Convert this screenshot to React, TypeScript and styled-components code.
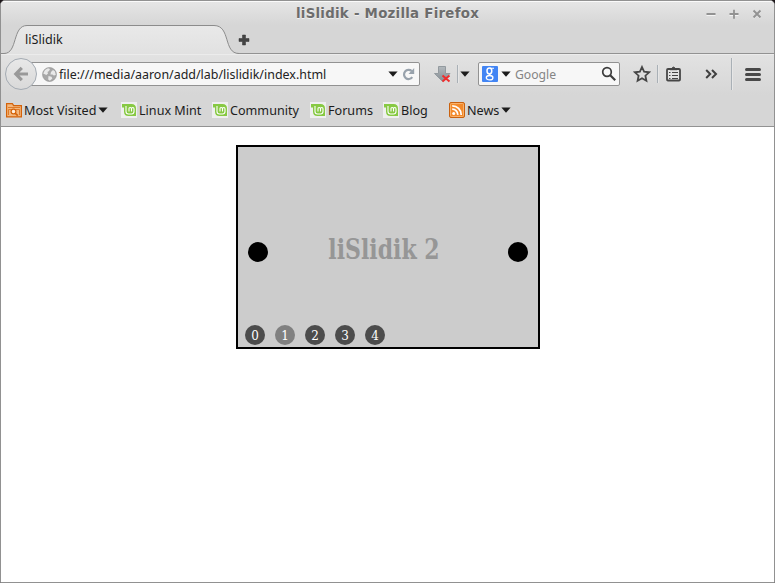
import React from 'react';
import styled, { createGlobalStyle } from 'styled-components';

const Global = createGlobalStyle`
  * { box-sizing: border-box; }
  body { margin: 0; background: #1b1518; overflow: hidden; }
  svg { display: block; flex: none; }
`;

const Window = styled.div`
  width: 775px;
  height: 583px;
  display: flex;
  flex-direction: column;
  border: 1px solid #919191;
  border-radius: 5px 5px 0 0;
  overflow: hidden;
  background: #fff;
  color: #1c1c1c;
  font: 12.6px/18px 'Noto Sans', 'Open Sans', sans-serif;
  white-space: nowrap;
`;

const TitleBar = styled.header`
  height: 24px;
  flex: none;
  display: grid;
  grid-template-columns: 1fr auto 1fr;
  align-items: center;
  border-top: 1px solid #fafafa;
  background: linear-gradient(#e5e5e5, #d6d6d6);
`;

const Title = styled.h1`
  grid-column: 2;
  margin: 0;
  padding-top: 1px;
  font: bold 13.33px/20px 'DejaVu Sans', sans-serif;
  letter-spacing: 0.27px;
  color: #6c6c6c;
  text-shadow: 0 1px #f0f0f0;
`;

const WindowButtons = styled.div`
  justify-self: end;
  display: flex;
  gap: 13px;
  margin-right: 12px;
`;

const TabStrip = styled.div`
  height: 29px;
  flex: none;
  display: flex;
  background: #d6d6d6;
  border-bottom: 1px solid #929292;
`;

const Tab = styled.div`
  position: relative;
  width: 236px;
  height: 29px;
  flex: none;
  padding: 6px 0 0 24px;
`;

const TabShape = styled.svg`
  position: absolute;
  left: 0;
  top: 0;
`;

const TabLabel = styled.span`
  position: relative;
`;

const NewTab = styled.div`
  padding: 9px 0 0 1px;
`;

const NavBar = styled.nav`
  height: 41px;
  flex: none;
  display: flex;
  align-items: center;
  padding: 0 0 2px 4px;
  border-top: 1px solid #ececec;
  background: linear-gradient(#e2e2e2, #d6d6d6);
`;

const BackButton = styled.div`
  width: 32px;
  height: 32px;
  flex: none;
  display: grid;
  place-items: center;
  border: 1px solid #a4abb3;
  border-radius: 50%;
  background: linear-gradient(#e8e8e8, #d9d9d9);
  z-index: 1;
`;

const Field = styled.div<{ $width: number; $left: number; $pad: number }>`
  width: ${p => p.$width}px;
  height: 24px;
  flex: none;
  display: flex;
  align-items: center;
  margin-left: ${p => p.$left}px;
  padding-left: ${p => p.$pad}px;
  border: 1px solid #929292;
  border-radius: 2px;
  background: #f7f7f7;
`;

const FieldText = styled.span<{ $width: number; $muted?: boolean }>`
  width: ${p => p.$width}px;
  flex: none;
  padding-top: 2px;
  font-size: ${p => (p.$muted ? 12.2 : 12.45)}px;
  color: ${p => (p.$muted ? '#858585' : '#222')};
`;

const Slot = styled.div<{ $left: number }>`
  flex: none;
  margin-left: ${p => p.$left}px;
`;

const Divider = styled.div<{ $left: number; $height: number }>`
  width: 2px;
  height: ${p => p.$height}px;
  flex: none;
  margin-left: ${p => p.$left}px;
  background: linear-gradient(90deg, #a9b0b6 50%, #e6e6e6 50%);
`;

const GoogleBadge = styled.div`
  width: 16px;
  height: 16px;
  margin-right: 3px;
  border-radius: 1px;
  background: #4285f4;
  display: grid;
  place-items: center;
`;

const Bookmarks = styled.div`
  height: 32px;
  flex: none;
  display: flex;
  align-items: center;
  padding: 0 0 2px 5px;
  border-bottom: 1px solid #929292;
  background: #d6d6d6;
`;

const Bookmark = styled.div<{ $width: number }>`
  width: ${p => p.$width}px;
  flex: none;
  display: flex;
  align-items: center;
  gap: 2px;
`;

const BookmarkLabel = styled.span`
  padding-top: 2px;
`;

const Page = styled.main`
  flex: 1;
  display: flex;
  justify-content: center;
  align-items: flex-start;
  padding-top: 18px;
  background: #fff;
`;

const Slider = styled.section`
  width: 304px;
  height: 204px;
  display: grid;
  grid-template-rows: 178px 20px;
  margin-left: 1px;
  border: 2px solid #000;
  background: #ccc;
`;

const Stage = styled.div`
  display: flex;
  justify-content: space-between;
  padding: 95px 10px 0;
`;

const Arrow = styled.button`
  width: 20px;
  height: 20px;
  padding: 0;
  border: 0;
  border-radius: 50%;
  background: #000;
`;

const Caption = styled.h2`
  margin: -8px 0 0 -8px;
  width: 112px;
  display: flex;
  justify-content: center;
  font: bold 27px/32px 'DejaVu Serif', serif;
  color: #969696;
  transform: scaleX(0.815);
`;

const Dots = styled.div`
  display: flex;
  gap: 10px;
  padding-left: 7px;
`;

const Dot = styled.span<{ $active: boolean }>`
  width: 20px;
  height: 20px;
  border-radius: 50%;
  background: ${p => (p.$active ? '#808080' : '#4c4c4c')};
  color: #fff;
  font: 13.3px/21px 'DejaVu Serif Condensed', 'DejaVu Serif', serif;
  text-align: center;
`;

const Caret = () => (
  <svg width="10" height="6" viewBox="0 0 10 6"><path d="M0.4 .5h9.2L5 5.7z" fill="#1c1c1c" /></svg>
);

const MintIcon = () => (
  <svg width="16" height="16" viewBox="0 0 16 16">
    <path d="M0 0h16v16H0z" fill="#efefef" />
    <path d="M1 2h9.5Q15 2 15 6.5V14H7.5Q3 14 3 9.5V5.5H1z" fill="#87c943" />
    <path d="M5 4v5.5Q5 12 7.5 12h3Q13 12 13 9.5V7q0-1.5-1.2-1.5T10.5 7v2.5M10.5 7q0-1.5-1.3-1.5T8 7v2.5" fill="none" stroke="#fff" strokeWidth="1.1" />
  </svg>
);

const FolderIcon = () => (
  <svg width="16" height="16" viewBox="0 0 16 16">
    <path d="M.6 14.9V1.6h5.8l1.2 2h7.8v11.3z" fill="#f3b77d" stroke="#d46209" strokeWidth="1.2" />
    <path d="M2 5.5h12M2.5 13V7.5h11V13" fill="none" stroke="#de7b29" />
    <circle cx="7.5" cy="9.5" r="2.4" fill="#fff0df" stroke="#d46209" strokeWidth="1.2" />
    <path d="m9.3 11.3 2.5 2.4" stroke="#d46209" strokeWidth="1.6" />
  </svg>
);

const RssIcon = () => (
  <svg width="16" height="16" viewBox="0 0 16 16">
    <rect x=".5" y=".5" width="15" height="15" rx="1.5" fill="#f38a2b" stroke="#c9610f" />
    <rect x="1.5" y="1.5" width="13" height="13" rx="1" fill="none" stroke="#f9b36d" />
    <circle cx="4.7" cy="11.4" r="1.5" fill="#fff" />
    <path d="M3.2 7.2a5.5 5.5 0 0 1 5.6 5.7M3.2 3.8a9 9 0 0 1 9 9.1" fill="none" stroke="#fff" strokeWidth="1.8" />
  </svg>
);

const GlobeIcon = () => (
  <svg width="15" height="15" viewBox="0 0 15 15">
    <circle cx="7.5" cy="7.5" r="6.9" fill="#a8a8a8" stroke="#999" strokeWidth=".8" />
    <path d="M1.2 6.6 3 3l3-1.8 2 .8-1 2-1.5 1L6 6.6 4.4 8zM9 5l2-2 2 1.6.8 3.4-2 .6-1.4-1.2-2 .2zM6.5 9l3 .8.8 1.7-2.4 2.2-1.7-1.2z" fill="#e9e9e9" />
  </svg>
);

const GoogleIcon = () => (
  <svg width="12" height="14" viewBox="0 0 12 14" fill="none" stroke="#fff">
    <ellipse cx="5.4" cy="4" rx="2.4" ry="2.9" strokeWidth="1.5" />
    <path d="M6 1.2h4M6.6 6.6q-2 1 .2 2.1" strokeWidth="1.1" />
    <ellipse cx="5.6" cy="10.7" rx="3.3" ry="2.2" strokeWidth="1.3" />
  </svg>
);

const bookmarks = [
  { label: 'Linux Mint', width: 91 },
  { label: 'Community', width: 98 },
  { label: 'Forums', width: 73 },
  { label: 'Blog', width: 66 },
];

export default function App() {
  return (
    <>
      <Global />
      <Window>
        <TitleBar>
          <Title>liSlidik - Mozilla Firefox</Title>
          <WindowButtons>
            <svg width="10" height="10" viewBox="0 0 10 10"><path d="M.5 6.5h9" stroke="#f4f4f4" /><path d="M.5 5h9" stroke="#929292" strokeWidth="1.8" /></svg>
            <svg width="10" height="10" viewBox="0 0 10 10"><path d="M.5 6.5h9" stroke="#f4f4f4" /><path d="M.5 5h9M5 .7v9" stroke="#929292" strokeWidth="1.8" /></svg>
            <svg width="10" height="10" viewBox="0 0 10 10"><path d="m1.5 2 7 7m0-7-7 7" stroke="#f4f4f4" strokeWidth="2" /><path d="m1.5 1.5 7 7m0-7-7 7" stroke="#929292" strokeWidth="2" /></svg>
          </WindowButtons>
        </TitleBar>
        <TabStrip>
          <Tab>
            <TabShape width="240" height="29" viewBox="0 0 240 29">
              <defs><linearGradient id="tab" x2="0" y2="1"><stop stopColor="#e9e9e9" /><stop offset="1" stopColor="#e1e1e1" /></linearGradient></defs>
              <path d="M0 28.5H3C17 28.5 11 .5 26 .5H213C230 .5 222 28.5 238 28.5V29H0z" fill="url(#tab)" />
              <path d="M0 28.5H3C17 28.5 11 .5 26 .5H213C230 .5 222 28.5 238 28.5" fill="none" stroke="#8c8c8c" />
            </TabShape>
            <TabLabel>liSlidik</TabLabel>
          </Tab>
          <NewTab>
            <svg width="12" height="12" viewBox="0 0 12 12"><path d="M4.5 1h3v3.5H11v3H7.5V11h-3V7.5H1v-3h3.5z" fill="#444" stroke="#333" strokeWidth=".5" /></svg>
          </NewTab>
        </TabStrip>
        <NavBar>
          <BackButton>
            <svg width="16" height="16" viewBox="0 0 16 16"><path d="M8.8 1.8 2.8 8l6 6.2M3 8h12" fill="none" stroke="#999" strokeWidth="3.2" /></svg>
          </BackButton>
          <Field $width={392} $left={-9} $pad={13}>
            <GlobeIcon />
            <Slot $left={2} />
            <FieldText $width={329}>file:///media/aaron/add/lab/lislidik/index.html</FieldText>
            <Caret />
            <Slot $left={4}>
              <svg width="13" height="14" viewBox="0 0 13 14"><path d="M10.3 10.2A4.6 4.6 0 1 1 9.7 4" fill="none" stroke="#98a2ac" strokeWidth="2.2" /><path d="M12.2 1v6H6.5z" fill="#98a2ac" /></svg>
            </Slot>
          </Field>
          <Slot $left={14}>
            <svg width="17" height="17" viewBox="0 0 17 17">
              <defs><linearGradient id="dl" x2="0" y2="1"><stop stopColor="#b3b9bd" /><stop offset="1" stopColor="#858d93" /></linearGradient></defs>
              <path d="M4.5.5h7v7H16l-7.5 8L.5 7.5h4z" fill="url(#dl)" stroke="#939a9f" />
              <path d="m8.5 9.5 7 6m0-6-7 6" stroke="#f02d2d" strokeWidth="2" />
            </svg>
          </Slot>
          <Divider $left={6} $height={18} />
          <Slot $left={1}><Caret /></Slot>
          <Field $width={142} $left={8} $pad={3}>
            <GoogleBadge><GoogleIcon /></GoogleBadge>
            <Caret />
            <Slot $left={4} />
            <FieldText $width={86} $muted>Google</FieldText>
            <svg width="16" height="16" viewBox="0 0 16 16"><circle cx="6" cy="6" r="4.3" fill="none" stroke="#3c3c3c" strokeWidth="1.7" /><path d="m9.2 9.2 5 5" stroke="#3c3c3c" strokeWidth="2.2" /></svg>
          </Field>
          <Slot $left={13}>
            <svg width="18" height="18" viewBox="0 0 18 18"><path d="m9 2 2.1 4.7 5 .6-3.7 3.4 1 5.1L9 13.3l-4.4 2.5 1-5.1-3.7-3.4 5-.6z" fill="none" stroke="#464646" strokeWidth="1.8" /></svg>
          </Slot>
          <Divider $left={6} $height={18} />
          <Slot $left={7}>
            <svg width="15" height="16" viewBox="0 0 15 16"><rect x="1" y="3" width="13" height="11.5" rx="1" fill="#e4e4e4" stroke="#464646" strokeWidth="1.8" /><path d="M4 2.7h1.5Q7.5-.5 9.5 2.7H11v1H4z" fill="#464646" stroke="#464646" /><path d="M3 6.5h1.5m1.5 0h6m-9 3h1.5m1.5 0h6m-9 3h1.5m1.5 0h6" stroke="#464646" /></svg>
          </Slot>
          <Slot $left={24}>
            <svg width="13" height="10" viewBox="0 0 13 10"><path d="m1.2 1 4 4-4 4M7 1l4 4-4 4" fill="none" stroke="#404040" strokeWidth="2" /></svg>
          </Slot>
          <Divider $left={13} $height={32} />
          <Slot $left={12}>
            <svg width="16" height="13" viewBox="0 0 16 13"><path d="M1.5 1.5h13m-13 5h13m-13 5h13" stroke="#484848" strokeWidth="3" strokeLinecap="round" /></svg>
          </Slot>
        </NavBar>
        <Bookmarks>
          <Bookmark $width={115}>
            <FolderIcon /><BookmarkLabel>Most Visited</BookmarkLabel><Caret />
          </Bookmark>
          {bookmarks.map(b => (
            <Bookmark key={b.label} $width={b.width}>
              <MintIcon /><BookmarkLabel>{b.label}</BookmarkLabel>
            </Bookmark>
          ))}
          <Bookmark $width={70}>
            <RssIcon /><BookmarkLabel>News</BookmarkLabel><Caret />
          </Bookmark>
        </Bookmarks>
        <Page>
          <Slider>
            <Stage>
              <Arrow aria-label="Previous" />
              <Caption>liSlidik 2</Caption>
              <Arrow aria-label="Next" />
            </Stage>
            <Dots>
              {[0, 1, 2, 3, 4].map(n => <Dot key={n} $active={n === 1}>{n}</Dot>)}
            </Dots>
          </Slider>
        </Page>
      </Window>
    </>
  );
}
